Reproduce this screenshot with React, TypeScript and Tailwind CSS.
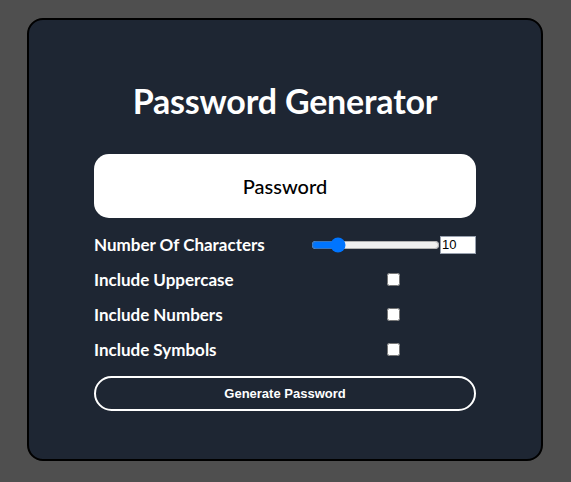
import React from "react";

export default function App() {
  return (
    <div className="w-[571px] h-[482px] bg-[#4f4f4f] flex flex-col items-start pt-[18px] pl-[27px]" style={{ fontFamily: "Lato, 'Open Sans', sans-serif" }}>
      <div className="w-[516px] h-[443px] bg-[#1e2633] border-2 border-black rounded-[16px] flex flex-col items-center">
        <h1 className="mt-[61px] text-white text-[34px] font-bold leading-[40px] tracking-[-0.2px]">Password Generator</h1>
        <div className="mt-[33px] w-[382px] h-[64px] bg-white rounded-[15px] flex items-center justify-center text-[20px] text-black font-medium">
          Password
        </div>
        <div className="w-[382px] mt-[9px] flex flex-col">
          <div className="flex items-center h-[35px]">
            <span className="flex-1 text-white font-bold text-[17px]">Number Of Characters</span>
            <div className="w-[165px] flex items-center">
              <input type="range" min={4} max={40} defaultValue={10} className="w-[129px] m-0" />
              <input type="number" defaultValue={10} className="w-[36px] h-[18px] bg-white text-black text-[13px] px-[1px] border border-gray-400 outline-none" style={{ fontFamily: "Arial, 'Liberation Sans', sans-serif" }} />
            </div>
          </div>
          {["Include Uppercase", "Include Numbers", "Include Symbols"].map((t) => (
            <div key={t} className="flex items-center h-[35px]">
              <span className="flex-1 text-white font-bold text-[17px]">{t}</span>
              <div className="w-[165px] flex justify-center">
                <input type="checkbox" className="w-[13px] h-[13px] m-0" />
              </div>
            </div>
          ))}
        </div>
        <button className="mt-[9px] w-[382px] h-[35px] rounded-full border-2 border-white text-white text-[13px] font-bold flex items-center justify-center" style={{ fontFamily: "Arial, 'Liberation Sans', sans-serif" }}>
          Generate Password
        </button>
      </div>
    </div>
  );
}
